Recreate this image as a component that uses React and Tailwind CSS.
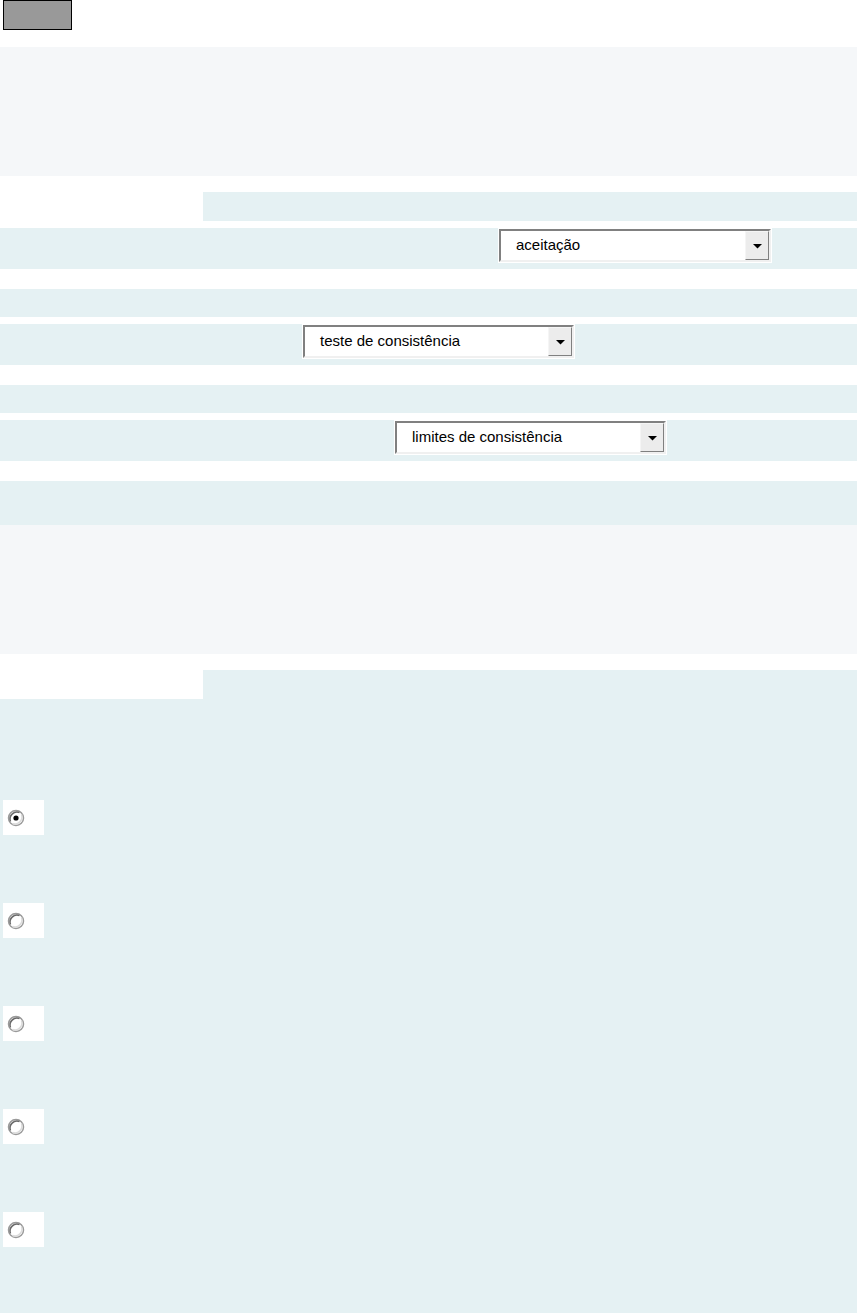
import React from 'react'

// select antigo (estilo Windows clássico)
function Combo({ label, width = 'w-[273px]', offset }) {
  return (
    <div className={`${offset} ${width} h-[35px] bg-white p-px`}>
      <div className="flex h-full w-full border-2 border-t-[#808080] border-l-[#808080] border-b-[#f0f0f0] border-r-[#f0f0f0] bg-white">
        <div className="flex flex-1 items-center pl-[15px] text-[15px] text-black" style={{ fontFamily: '"Liberation Sans", Arial, sans-serif' }}>
          {label}
        </div>
        <div className="flex w-[24px] items-center justify-center border border-t-[#f5f5f5] border-l-[#f5f5f5] border-b-[#808080] border-r-[#808080] bg-[#ececec]">
          <svg width="9" height="6" viewBox="0 0 9 6">
            <path d="M0 1h9L4.5 5.5z" fill="#000" />
          </svg>
        </div>
      </div>
    </div>
  )
}

function Radio({ checked }) {
  return (
    <div className="ml-[3px] flex h-[35px] w-[41px] items-center bg-white pl-[4px]">
      <svg width="18" height="18" viewBox="0 0 18 18">
        <circle cx="9" cy="9" r="7.5" fill="#fff" stroke="#9a9a9a" strokeWidth="1.5" />
        <path d="M3.5 12.5A7 7 0 0 1 12.5 3.5" fill="none" stroke="#6a6a6a" strokeWidth="1.5" />
        <path d="M14.5 5.5A7 7 0 0 1 5.5 14.5" fill="none" stroke="#dcdcdc" strokeWidth="1.5" />
        {checked && <circle cx="9" cy="9" r="2.6" fill="#000" />}
      </svg>
    </div>
  )
}

export default function App() {
  return (
    <div className="w-[858px] bg-white">
      <div className="ml-[3px] h-[30px] w-[69px] border border-black bg-[#999999]" />

      <div className="mt-[17px] h-[129px] w-[857px] bg-[#f5f7f9]" />

      <div className="mt-[16px] ml-[203px] h-[29px] w-[654px] bg-[#e5f1f3]" />

      <div className="mt-[7px] h-[41px] w-[857px] bg-[#e5f1f3]">
        <Combo label="aceitação" offset="ml-[498px]" width="w-[274px]" />
      </div>

      <div className="mt-[20px] h-[28px] w-[857px] bg-[#e5f1f3]" />
      <div className="mt-[7px] h-[41px] w-[857px] bg-[#e5f1f3]">
        <Combo label="teste de consistência" offset="ml-[302px]" />
      </div>

      <div className="mt-[20px] h-[28px] w-[857px] bg-[#e5f1f3]" />
      <div className="mt-[7px] h-[41px] w-[857px] bg-[#e5f1f3]">
        <Combo label="limites de consistência" offset="ml-[394px]" />
      </div>

      <div className="mt-[20px] h-[44px] w-[857px] bg-[#e5f1f3]" />
      <div className="h-[129px] w-[857px] bg-[#f5f7f9]" />

      <div className="mt-[16px] ml-[203px] h-[29px] w-[654px] bg-[#e5f1f3]" />

      <div className="flex h-[614px] w-[857px] flex-col bg-[#e5f1f3] pt-[101px]">
        <div className="flex flex-col gap-[68px]">
          <Radio checked />
          <Radio />
          <Radio />
          <Radio />
          <Radio />
        </div>
      </div>
    </div>
  )
}
